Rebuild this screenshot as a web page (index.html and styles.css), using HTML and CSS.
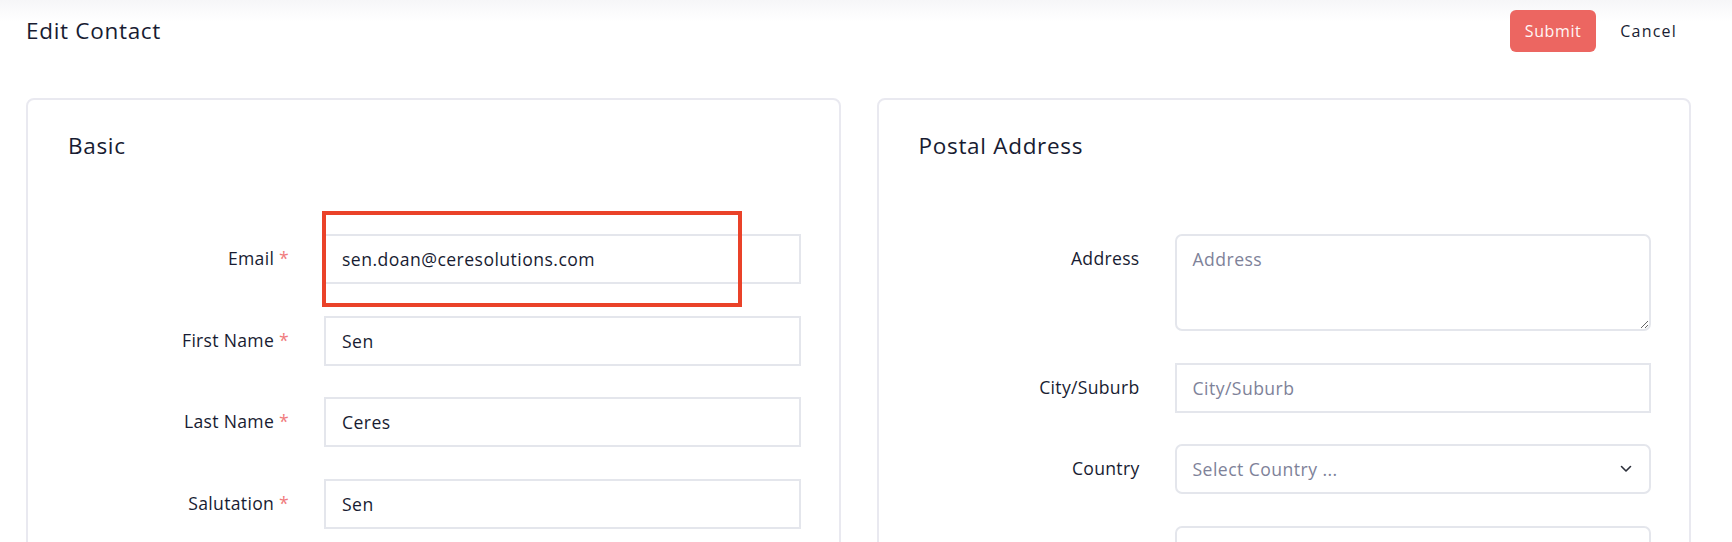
FILE: index.html
```html
<!DOCTYPE html>
<html lang="en">
<head>
<meta charset="utf-8">
<title>Edit Contact</title>
<link rel="stylesheet" href="styles.css">
</head>
<body>
<div class="page">
  <header class="toolbar">
    <h1 class="page-title">Edit Contact</h1>
    <div class="actions">
      <button class="btn btn-primary" type="button">Submit</button>
      <button class="btn btn-plain" type="button">Cancel</button>
    </div>
  </header>

  <main class="cards">
    <section class="card">
      <h2 class="card-title">Basic</h2>
      <div class="form">
        <div class="row">
          <label class="label">Email <span class="req">*</span></label>
          <div class="field">
            <input class="input square" type="text" value="sen.doan@ceresolutions.com">
            <div class="annotation"></div>
          </div>
        </div>
        <div class="row">
          <label class="label">First Name <span class="req">*</span></label>
          <div class="field"><input class="input square" type="text" value="Sen"></div>
        </div>
        <div class="row">
          <label class="label">Last Name <span class="req">*</span></label>
          <div class="field"><input class="input square" type="text" value="Ceres"></div>
        </div>
        <div class="row">
          <label class="label">Salutation <span class="req">*</span></label>
          <div class="field"><input class="input square" type="text" value="Sen"></div>
        </div>
      </div>
    </section>

    <section class="card">
      <h2 class="card-title">Postal Address</h2>
      <div class="form">
        <div class="row">
          <label class="label">Address</label>
          <div class="field"><textarea class="input textarea" placeholder="Address"></textarea></div>
        </div>
        <div class="row">
          <label class="label">City/Suburb</label>
          <div class="field"><input class="input square" type="text" placeholder="City/Suburb"></div>
        </div>
        <div class="row">
          <label class="label">Country</label>
          <div class="field">
            <div class="input select">
              <span class="placeholder">Select Country ...</span>
              <svg class="chevron" width="12" height="8" viewBox="0 0 12 8" aria-hidden="true"><path d="M1.5 1.5 L6 6 L10.5 1.5" fill="none" stroke="#2b2f3a" stroke-width="1.6" stroke-linecap="round" stroke-linejoin="round"/></svg>
            </div>
          </div>
        </div>
        <div class="row">
          <span class="label"></span>
          <div class="field"><input class="input rounded" type="text" aria-label="State"></div>
        </div>
      </div>
    </section>
  </main>
</div>
</body>
</html>
```

FILE: styles.css
```css
* {
  box-sizing: border-box;
}

html, body {
  margin: 0;
  padding: 0;
  background: #ffffff;
}

body {
  font-family: "Open Sans", "Noto Sans", sans-serif;
  color: #181c32;
  background: linear-gradient(#f6f6f8 0, #fbfbfc 12px, #ffffff 22px) no-repeat;
  background-size: 100% 24px;
  overflow: hidden;
}

.page {
  padding: 10px 41px 0 26px;
}

.toolbar {
  display: flex;
  align-items: center;
  justify-content: space-between;
  height: 42px;
}

.page-title {
  margin: 0;
  font-size: 22.5px;
  font-weight: 500;
  letter-spacing: 0.7px;
  line-height: 30px;
  color: #181c32;
}

.actions {
  display: flex;
  align-items: center;
  gap: 10px;
}

.btn {
  font-family: inherit;
  font-size: 16px;
  letter-spacing: 0.6px;
  height: 42px;
  border: 0;
  border-radius: 6px;
  cursor: pointer;
}

.btn-primary {
  padding: 0 15px;
  background: #ec6661;
  color: #fff6f5;
}

.btn-plain {
  padding: 0 14px;
  letter-spacing: 1.2px;
  background: transparent;
  color: #181c32;
}

.cards {
  display: grid;
  grid-template-columns: 1fr 1fr;
  gap: 36px;
  margin-top: 46px;
}

.card {
  border: 2px solid #e9e9f0;
  border-radius: 8px;
  padding: 30px 38px 40px 40px;
  min-height: 600px;
}

.card-title {
  margin: 0;
  font-size: 22.5px;
  font-weight: 500;
  letter-spacing: 0.7px;
  line-height: 31px;
  color: #181c32;
}

.form {
  margin-top: 73px;
  display: flex;
  flex-direction: column;
  gap: 31.5px;
}

.row {
  display: grid;
  grid-template-columns: 221px 1fr;
  column-gap: 35px;
  align-items: start;
}

.label {
  text-align: right;
  font-size: 17.6px;
  letter-spacing: 0.3px;
  line-height: 24px;
  padding-top: 12px;
  color: #181c32;
}

.req {
  color: #f07b7d;
}

.field {
  position: relative;
}

.input {
  display: block;
  width: 100%;
  height: 50px;
  border: 2px solid #e4e6ec;
  background: #ffffff;
  font-family: inherit;
  font-size: 17.6px;
  letter-spacing: 0.45px;
  color: #181c32;
  padding: 0 16px;
  outline: none;
}

.input::placeholder {
  color: #7e8299;
}

.square {
  border-radius: 0;
}

.rounded {
  border-radius: 7px;
}

.textarea {
  height: 97px;
  border-radius: 7px;
  padding: 11px 16px;
  line-height: 24px;
  resize: vertical;
}

.select {
  display: flex;
  align-items: center;
  justify-content: space-between;
  border-radius: 7px;
  padding: 0 17px 0 16px;
}

.placeholder {
  color: #7e8299;
}

.chevron {
  display: block;
}

.annotation {
  position: absolute;
  left: -2px;
  top: -23px;
  width: 420px;
  height: 96px;
  border: 4px solid #ea4229;
  pointer-events: none;
}
```
